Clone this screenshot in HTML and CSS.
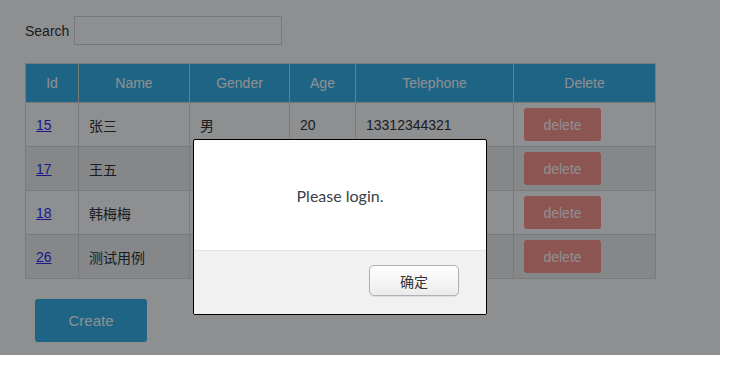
FILE: index.html
```html
<!DOCTYPE html>
<html lang="en">
  <head>
    <meta charset="UTF-8" />
    <meta name="viewport" content="width=device-width, initial-scale=1.0" />
    <title>Users</title>
    <link rel="stylesheet" href="styles.css">
  </head>
  <body>
    <div class="page">
      <div class="search">
        <label for="search">Search</label>
        <input type="text" id="search" />
      </div>

      <table class="user-table">
        <colgroup>
          <col class="c-id" />
          <col class="c-name" />
          <col class="c-gender" />
          <col class="c-age" />
          <col class="c-tel" />
          <col class="c-del" />
        </colgroup>
        <thead>
          <tr>
            <th>Id</th>
            <th>Name</th>
            <th>Gender</th>
            <th>Age</th>
            <th>Telephone</th>
            <th>Delete</th>
          </tr>
        </thead>
        <tbody>
          <tr>
            <td><a href="#">15</a></td>
            <td>张三</td>
            <td>男</td>
            <td>20</td>
            <td>13312344321</td>
            <td><button class="btn-delete">delete</button></td>
          </tr>
          <tr>
            <td><a href="#">17</a></td>
            <td>王五</td>
            <td></td>
            <td></td>
            <td></td>
            <td><button class="btn-delete">delete</button></td>
          </tr>
          <tr>
            <td><a href="#">18</a></td>
            <td>韩梅梅</td>
            <td></td>
            <td></td>
            <td></td>
            <td><button class="btn-delete">delete</button></td>
          </tr>
          <tr>
            <td><a href="#">26</a></td>
            <td>测试用例</td>
            <td></td>
            <td></td>
            <td></td>
            <td><button class="btn-delete">delete</button></td>
          </tr>
        </tbody>
      </table>

      <button class="btn-create">Create</button>

      <!-- 로그인 안내 모달 -->
      <div class="mask"></div>
      <div class="dialog">
        <div class="dialog-body">Please login.</div>
        <div class="dialog-foot">
          <button class="btn-ok">确定</button>
        </div>
      </div>
    </div>
  </body>
</html>
```

FILE: styles.css
```css
body {
  margin: 0;
  padding: 0;
  font-family: "Liberation Sans", Arial, "Noto Sans CJK SC", sans-serif;
  font-size: 14px;
  color: #333;
}
.page {
  position: relative;
  width: 720px;
  height: 355px;
  padding: 16px 0 0 25px;
  box-sizing: border-box;
  background-color: #fff;
}
.search {
  display: flex;
  align-items: center;
  gap: 5px;
  height: 29px;
}
.search input {
  width: 208px;
  height: 29px;
  margin: 0;
  padding: 0 6px;
  box-sizing: border-box;
  border: 1px solid #d6d6d6;
  background-color: #fff;
}
.user-table {
  margin-top: 18px;
  width: 630px;
  table-layout: fixed;
  border-collapse: collapse;
}
.c-id { width: 53px; }
.c-name { width: 111px; }
.c-gender { width: 100px; }
.c-age { width: 66px; }
.c-tel { width: 158px; }
.c-del { width: 142px; }
.user-table th,
.user-table td {
  border: 1px solid #d9d9d9;
  padding: 0 10px;
  text-align: left;
}
.user-table th {
  height: 38px;
  background-color: #37b2ea;
  color: #fff;
  font-weight: normal;
  text-align: center;
}
.user-table td {
  height: 43px;
}
.user-table tbody tr:nth-of-type(even) td {
  background-color: #f0f0f0;
}
.user-table a {
  color: #2f2cf5;
}
.btn-delete {
  width: 77px;
  height: 33px;
  border: none;
  border-radius: 3px;
  background-color: #fb978f;
  color: #fff;
  font-family: inherit;
  font-size: 14px;
  cursor: pointer;
}
.btn-create {
  display: block;
  margin: 20px 0 0 10px;
  width: 112px;
  height: 43px;
  border: none;
  border-radius: 3px;
  background-color: #37b2ea;
  color: #fff;
  font-family: inherit;
  font-size: 15px;
}
.mask {
  position: absolute;
  inset: 0;
  background-color: rgba(0, 2, 6, 0.445);
}
.dialog {
  position: absolute;
  left: 193px;
  top: 139px;
  width: 294px;
  height: 176px;
  box-sizing: border-box;
  border: 1px solid #000;
  border-radius: 2px;
  background-color: #fff;
  display: flex;
  flex-direction: column;
  overflow: hidden;
}
.dialog-body {
  height: 110px;
  display: flex;
  justify-content: center;
  align-items: center;
  font-family: Lato, "Noto Sans", sans-serif;
  font-size: 16px;
  color: #3a3f48;
}
.dialog-foot {
  flex: 1;
  display: flex;
  justify-content: flex-end;
  align-items: flex-start;
  padding: 14px 27px 0 0;
  border-top: 1px solid #e4e4e4;
  background-color: #f1f1f1;
}
.btn-ok {
  width: 90px;
  height: 31px;
  border: 1px solid #b0b0b0;
  border-radius: 5px;
  background: linear-gradient(#ffffff, #ebebeb);
  box-shadow: 0 1px 1px rgba(0, 0, 0, 0.08);
  color: #333;
  font-family: "Noto Sans CJK SC", sans-serif;
  font-size: 14px;
}
```
